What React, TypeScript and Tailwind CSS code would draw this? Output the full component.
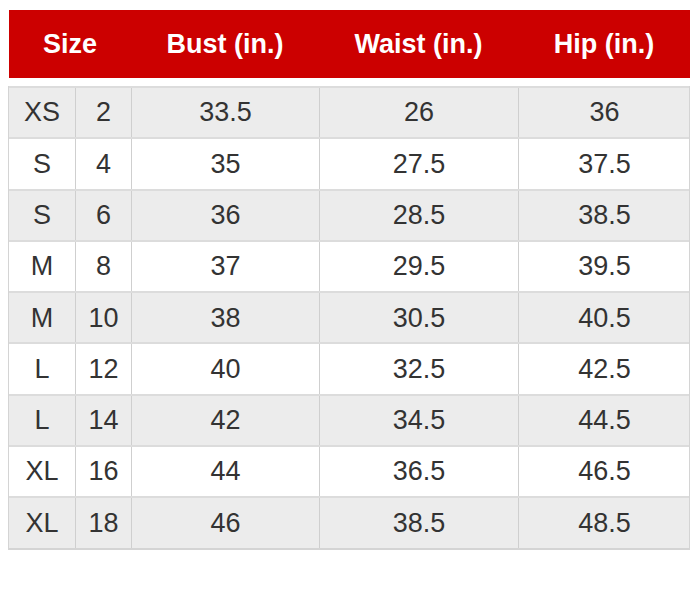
const rows: [string, string, string, string, string][] = [
  ['XS', '2', '33.5', '26', '36'],
  ['S', '4', '35', '27.5', '37.5'],
  ['S', '6', '36', '28.5', '38.5'],
  ['M', '8', '37', '29.5', '39.5'],
  ['M', '10', '38', '30.5', '40.5'],
  ['L', '12', '40', '32.5', '42.5'],
  ['L', '14', '42', '34.5', '44.5'],
  ['XL', '16', '44', '36.5', '46.5'],
  ['XL', '18', '46', '38.5', '48.5'],
];

export default function App() {
  return (
    <div className="w-[699px] h-[592px] bg-white pt-[10px] pl-[8px] font-['Liberation_Sans',Arial,sans-serif]">
      {/* Header */}
      <div className="ml-[1px] w-[681px] h-[68px] bg-[#cc0000] grid grid-cols-[122px_188px_199px_172px] items-center text-white font-bold text-[27px]">
        <div className="text-center">Size</div>
        <div className="text-center">Bust (in.)</div>
        <div className="text-center">Waist (in.)</div>
        <div className="text-center">Hip (in.)</div>
      </div>

      {/* Body */}
      <div className="mt-[8px] w-[682px] border-l border-r border-b-2 border-[#d4d4d4] text-[27px] text-[#333]">
        {rows.map((r, i) => (
          <div
            key={i}
            className={`grid grid-cols-[67px_56px_188px_199px_171px] h-[51.3px] border-t-2 border-[#dcdcdc] ${
              i % 2 === 0 ? 'bg-[#ececec]' : 'bg-white'
            }`}
          >
            {r.map((c, j) => (
              <div
                key={j}
                className={`flex items-center justify-center ${j < 4 ? 'border-r border-[#cfcfcf]' : ''}`}
              >
                {c}
              </div>
            ))}
          </div>
        ))}
      </div>
    </div>
  );
}
